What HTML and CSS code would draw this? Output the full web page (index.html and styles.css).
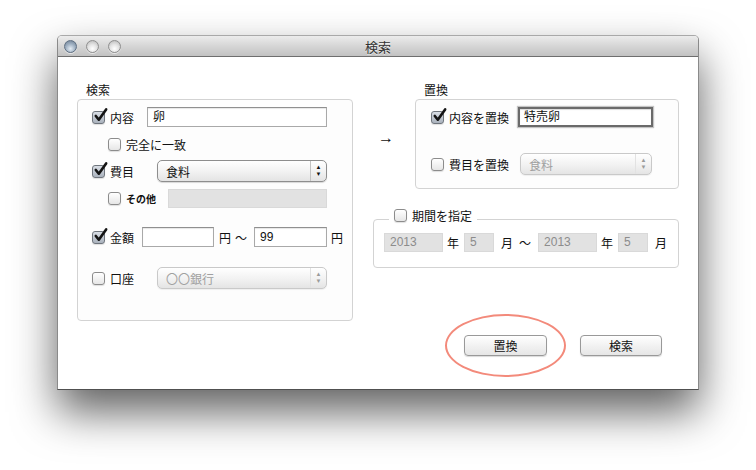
FILE: index.html
```html
<!DOCTYPE html>
<html lang="ja">
<head>
    <meta charset="UTF-8">
    <title>検索</title>
    <link rel="stylesheet" href="styles.css">
</head>
<body>
    <div class="desk">
        <div class="window">
            <div class="titlebar">
                <div class="lights">
                    <span class="light light-close"></span>
                    <span class="light"></span>
                    <span class="light"></span>
                </div>
                <div class="title">検索</div>
                <div></div>
            </div>

            <div class="content">
                <!-- 検索 -->
                <section class="group">
                    <div class="group-label">検索</div>
                    <div class="group-box box-search">
                        <div class="row">
                            <span class="cb checked"><svg viewBox="0 0 16 16"><path d="M3 8.5 L6.2 12.5 L14 1.5"/></svg></span>
                            <span class="lbl" style="width:37px">内容</span>
                            <span class="field" style="width:180px">卵</span>
                        </div>
                        <div class="row row-sub mt7">
                            <span class="cb"></span>
                            <span class="lbl">完全に一致</span>
                        </div>
                        <div class="row row-tall mt6">
                            <span class="cb checked"><svg viewBox="0 0 16 16"><path d="M3 8.5 L6.2 12.5 L14 1.5"/></svg></span>
                            <span class="lbl" style="width:47px">費目</span>
                            <span class="popup" style="width:170px">
                                <span class="popup-text">食料</span>
                                <span class="popup-arrows">▲<br>▼</span>
                            </span>
                        </div>
                        <div class="row row-sub mt6">
                            <span class="cb"></span>
                            <span class="lbl lbl-small" style="width:42px">その他</span>
                            <span class="field field-off" style="width:159px"></span>
                        </div>
                        <div class="row mt19">
                            <span class="cb checked"><svg viewBox="0 0 16 16"><path d="M3 8.5 L6.2 12.5 L14 1.5"/></svg></span>
                            <span class="lbl" style="width:32px">金額</span>
                            <span class="field" style="width:72px"></span>
                            <span class="unit ml5">円</span>
                            <span class="unit ml4">〜</span>
                            <span class="field ml7" style="width:73px">99</span>
                            <span class="unit ml4">円</span>
                        </div>
                        <div class="row row-tall mt20">
                            <span class="cb"></span>
                            <span class="lbl" style="width:47px">口座</span>
                            <span class="popup popup-off" style="width:170px">
                                <span class="popup-text">〇〇銀行</span>
                                <span class="popup-arrows">▲<br>▼</span>
                            </span>
                        </div>
                    </div>
                </section>

                <div class="right">
                    <div class="replace-wrap">
                        <div class="arrow">→</div>
                        <!-- 置換 -->
                        <section class="group">
                            <div class="group-label">置換</div>
                            <div class="group-box box-replace">
                                <div class="row">
                                    <span class="cb checked"><svg viewBox="0 0 16 16"><path d="M3 8.5 L6.2 12.5 L14 1.5"/></svg></span>
                                    <span class="lbl" style="width:69px">内容を置換</span>
                                    <span class="field field-focus" style="width:135px">特売卵</span>
                                </div>
                                <div class="row row-tall mt26">
                                    <span class="cb"></span>
                                    <span class="lbl" style="width:71px">費目を置換</span>
                                    <span class="popup popup-off" style="width:132px">
                                        <span class="popup-text">食料</span>
                                        <span class="popup-arrows">▲<br>▼</span>
                                    </span>
                                </div>
                            </div>
                        </section>
                    </div>

                    <!-- 期間 -->
                    <div class="period">
                        <div class="legend">
                            <span class="cb"></span>
                            <span class="lbl">期間を指定</span>
                        </div>
                        <div class="row period-row">
                            <span class="field field-off field-num" style="width:59px">2013</span>
                            <span class="unit ml4">年</span>
                            <span class="field field-off field-num ml5" style="width:30px">5</span>
                            <span class="unit ml7">月</span>
                            <span class="unit ml6">〜</span>
                            <span class="field field-off field-num ml7" style="width:59px">2013</span>
                            <span class="unit ml4">年</span>
                            <span class="field field-off field-num ml5" style="width:30px">5</span>
                            <span class="unit ml7">月</span>
                        </div>
                    </div>

                    <div class="buttons">
                        <span class="mark-wrap">
                            <button class="btn">置換</button>
                            <span class="mark"></span>
                        </span>
                        <button class="btn">検索</button>
                    </div>
                </div>
            </div>
        </div>
    </div>
</body>
</html>
```

FILE: styles.css
```css
body {
    margin: 0;
    width: 756px;
    height: 470px;
    overflow: hidden;
    background: #fff;
    font-family: "Liberation Sans", "Noto Sans CJK JP", sans-serif;
    font-size: 12px;
    color: #111;
}

.desk {
    padding: 35px 0 0 57px;
}

.window {
    width: 642px;
    height: 355px;
    box-sizing: border-box;
    border: 1px solid #8a8a8a;
    border-top-color: #a9a9a9;
    border-bottom-color: #505050;
    border-radius: 5px 5px 0 0;
    background: #fff;
    box-shadow: 0 22px 44px rgba(0, 0, 0, 0.62);
}

/* title bar */
.titlebar {
    height: 20px;
    display: grid;
    grid-template-columns: 1fr auto 1fr;
    align-items: center;
    border-bottom: 1px solid #6e6e6e;
    border-radius: 4px 4px 0 0;
    background: linear-gradient(#ececec, #d6d6d6 50%, #c2c2c2);
}

.lights {
    display: flex;
    gap: 9px;
    padding-left: 6px;
}

.light {
    width: 11px;
    height: 11px;
    border-radius: 50%;
    border: 1px solid #8f8f8f;
    background: radial-gradient(circle at 50% 70%, #ffffff, #e4e4e4 45%, #b4b4b4);
    box-shadow: 0 1px 0 rgba(255, 255, 255, 0.6);
}

.light-close {
    border-color: #5e6f82;
    background: radial-gradient(circle at 50% 70%, #e4ecf4, #9fb0c2 50%, #6a7c90);
}

.title {
    font-size: 13px;
    color: #333;
    text-shadow: 0 1px 0 rgba(255, 255, 255, 0.6);
}

/* content */
.content {
    display: flex;
    padding: 27px 0 0 19px;
}

.group-label {
    height: 15px;
    line-height: 15px;
    padding-left: 9px;
}

.group-box {
    box-sizing: border-box;
    border: 1px solid #d3d3d3;
    border-radius: 4px;
    background: #fdfdfd;
}

.box-search {
    width: 276px;
    height: 222px;
    padding: 7px 0 0 14px;
}

.box-replace {
    width: 264px;
    height: 90px;
    padding: 7px 0 0 15px;
}

.row {
    display: flex;
    align-items: center;
    height: 20px;
}

.row-tall {
    height: 22px;
}

.row-sub {
    padding-left: 16px;
}

.mt6 { margin-top: 6px; }
.mt7 { margin-top: 7px; }
.mt19 { margin-top: 19px; }
.mt20 { margin-top: 20px; }
.mt26 { margin-top: 26px; }
.ml4 { margin-left: 4px; }
.ml5 { margin-left: 5px; }
.ml6 { margin-left: 6px; }
.ml7 { margin-left: 7px; }
.ml8 { margin-left: 8px; }

/* checkbox */
.cb {
    position: relative;
    flex: none;
    width: 11px;
    height: 11px;
    border: 1px solid #8c8c8c;
    border-radius: 3px;
    background: linear-gradient(#ffffff, #e6e6e6);
    box-shadow: 0 1px 1px rgba(0, 0, 0, 0.12);
}

.cb.checked {
    border-color: #6f757d;
    background: linear-gradient(#d9dee5, #aab2bd);
}

.cb svg {
    position: absolute;
    left: 0;
    top: -4px;
    width: 15px;
    height: 15px;
    overflow: visible;
}

.cb svg path {
    fill: none;
    stroke: #141414;
    stroke-width: 2.8;
    stroke-linecap: round;
    stroke-linejoin: round;
}

.lbl {
    flex: none;
    margin-left: 5px;
    white-space: nowrap;
}

.lbl-small {
    font-size: 10px;
    font-weight: bold;
}

.unit {
    flex: none;
}

/* text fields */
.field {
    flex: none;
    box-sizing: border-box;
    height: 20px;
    line-height: 18px;
    padding-left: 5px;
    border: 1px solid #a9a9a9;
    border-top-color: #8f8f8f;
    background: #fff;
    box-shadow: inset 0 1px 1px rgba(0, 0, 0, 0.1);
}

.field-off {
    height: 19px;
    line-height: 17px;
    border-color: #d9d9d9;
    background: #e2e2e2;
    box-shadow: none;
}

.field-num {
    color: #8c8c8c;
}

.field-focus {
    border: 2px solid #6a6a6a;
    line-height: 16px;
    padding-left: 4px;
    box-shadow: 0 0 1px 1px #c4c4c4, inset 0 1px 1px rgba(0, 0, 0, 0.15);
}

/* popup buttons */
.popup {
    flex: none;
    box-sizing: border-box;
    height: 22px;
    display: flex;
    align-items: center;
    border: 1px solid #8e8e8e;
    border-radius: 5px;
    background: linear-gradient(#ffffff, #f3f3f3 50%, #e4e4e4);
    box-shadow: 0 1px 1px rgba(0, 0, 0, 0.15);
}

.popup-text {
    flex: 1;
    padding-left: 8px;
}

.popup-arrows {
    width: 16px;
    height: 100%;
    box-sizing: border-box;
    border-left: 1px solid #c2c2c2;
    font-size: 6px;
    line-height: 7px;
    padding-top: 3px;
    text-align: center;
    color: #111;
}

.popup-off {
    border-color: #c9c9c9;
    color: #a0a0a0;
    box-shadow: 0 1px 1px rgba(0, 0, 0, 0.06);
}

.popup-off .popup-arrows {
    border-left-color: #e2e2e2;
    color: #9a9a9a;
}

/* right column */
.right {
    width: 306px;
    margin-left: 20px;
}

.replace-wrap {
    display: flex;
}

.arrow {
    width: 37px;
    padding-left: 5px;
    margin-top: 46px;
    line-height: 16px;
    font-size: 16px;
}

.period {
    box-sizing: border-box;
    height: 49px;
    margin-top: 30px;
    padding: 0 0 0 10px;
    border: 1px solid #d3d3d3;
    border-radius: 4px;
}

.legend {
    display: flex;
    align-items: center;
    width: max-content;
    height: 16px;
    margin: -13px 0 0 5px;
    padding: 0 5px;
    background: #fff;
}

.period-row {
    margin-top: 10px;
    height: 19px;
}

/* push buttons */
.buttons {
    display: flex;
    justify-content: flex-end;
    gap: 33px;
    margin-top: 67px;
    padding-right: 17px;
}

.mark-wrap {
    position: relative;
}

.btn {
    display: block;
    width: 83px;
    height: 21px;
    padding: 0;
    border: 1px solid #999;
    border-radius: 4px;
    background: linear-gradient(#ffffff, #f2f2f2 50%, #e6e6e6);
    box-shadow: 0 1px 1px rgba(0, 0, 0, 0.15);
    font-family: "Liberation Sans", "Noto Sans CJK JP", sans-serif;
    font-size: 12px;
    color: #111;
}

.buttons > .btn {
    width: 82px;
}

.mark {
    position: absolute;
    left: -19px;
    top: -21px;
    width: 117px;
    height: 59px;
    border: 2px solid #f38a7b;
    border-radius: 50%;
}
```
